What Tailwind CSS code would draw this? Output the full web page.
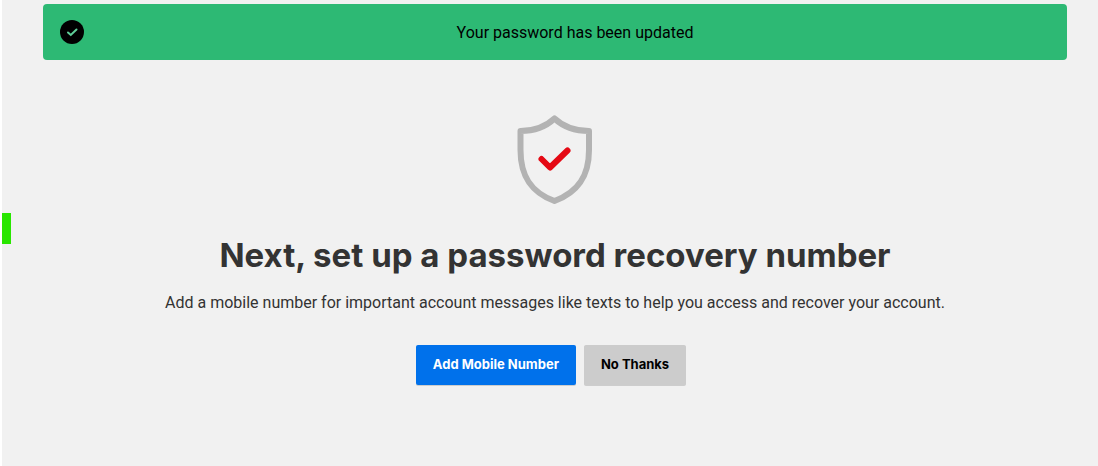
<!DOCTYPE html>
<html lang="en">
<head>
    <meta charset="UTF-8">
    <meta name="viewport" content="width=device-width, initial-scale=1.0">
    <title>Password updated</title>
    <script src="https://cdn.jsdelivr.net/npm/@tailwindcss/browser@4"></script>
</head>
<body class="relative min-h-screen border-l-2 border-white bg-[#f1f1f1] font-['Roboto','Liberation_Sans',sans-serif] text-[#333]">
    <div class="absolute -left-px top-[213px] h-[31px] w-[10px] bg-[#29e600]"></div>

    <main class="pt-1 pr-[31px] pl-[41px]">
        <div role="status" class="flex h-14 items-center gap-4 rounded bg-[#2db974] px-4 text-black">
            <svg class="size-6 shrink-0 overflow-visible" viewBox="0 0 24 24" fill="none" aria-hidden="true">
                <circle cx="13" cy="12" r="12" fill="#000"/>
                <path d="M9 12.500l2.800 2.500 5.700-5.500" stroke="#5fce98" stroke-width="2" stroke-linecap="round"/>
            </svg>
            <p class="grow pt-px text-center text-base">Your password has been updated</p>
        </div>

        <section class="flex flex-col items-center pt-[54px] text-center">
            <svg class="h-[92px] w-20" viewBox="0 0 80 92" fill="none" stroke-linecap="round" stroke-linejoin="round" aria-hidden="true">
                <path d="M39.500 4.500C31 12.500 20 17 5.500 17V36C5.500 61 15 78 39.500 87C64 78 74 61 74 36V17C60 17 48 12.500 39.500 4.500Z" stroke="#b3b3b3" stroke-width="6"/>
                <path d="M26.500 45L35 53.500L52.500 36.500" stroke="#e50914" stroke-width="6"/>
            </svg>
            <h1 class="mt-6 font-['Inter','Liberation_Sans',sans-serif] text-[33px] leading-[50px] font-bold">Next, set up a password recovery number</h1>
            <p class="mt-[11px] text-base leading-6">Add a mobile number for important account messages like texts to help you access and recover your account.</p>
            <div class="mt-[30px] flex pb-10 font-['Inter','Liberation_Sans',sans-serif]">
                <button type="button" class="mr-2 h-10 rounded-xs bg-[#0071eb] px-[17px] text-[13px] font-bold text-white shadow-[0_1px_0_rgba(0,0,0,0.15)]">Add Mobile Number</button>
                <button type="button" class="mr-2 h-10 rounded-xs bg-[#ccc] px-[17px] text-[13px] font-bold text-black shadow-[0_1px_0_rgba(0,0,0,0.15)]">No Thanks</button>
            </div>
        </section>
    </main>
</body>
</html>
